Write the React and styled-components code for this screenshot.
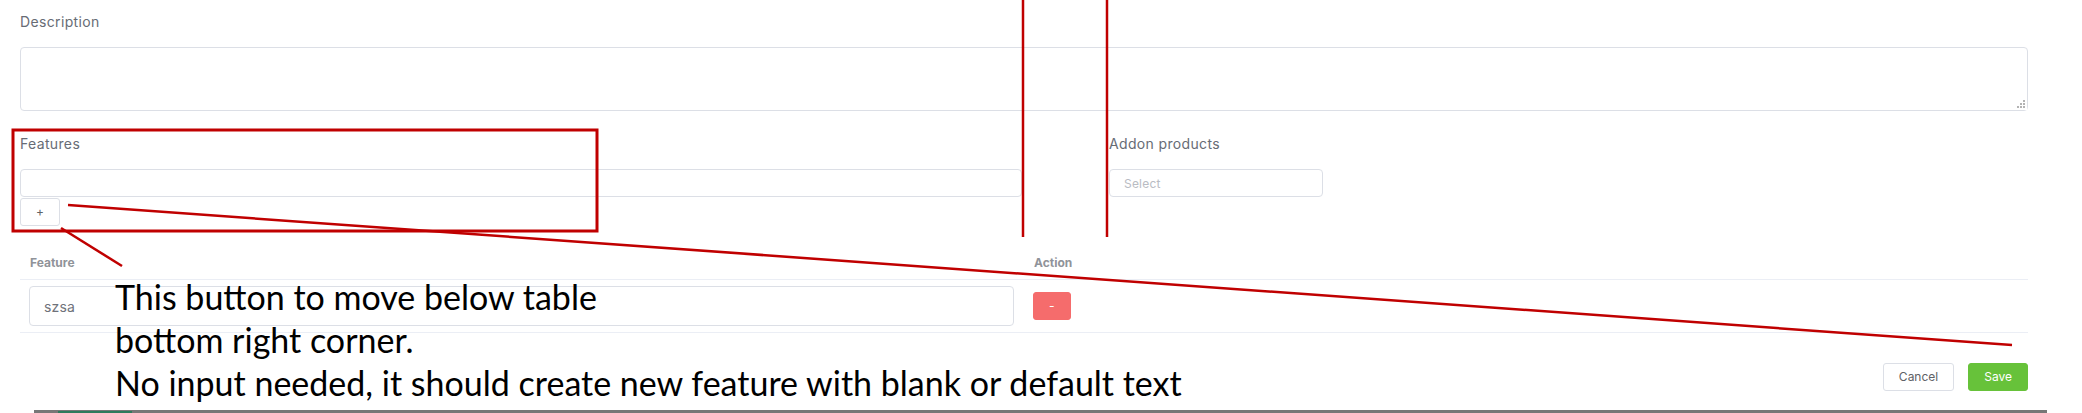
import React from 'react';
import styled, { createGlobalStyle } from 'styled-components';

const GlobalStyle = createGlobalStyle`
  html, body {
    margin: 0;
    padding: 0;
    background: #fff;
  }
  body {
    font-family: Inter, "Open Sans", "Liberation Sans", sans-serif;
    color: #606266;
  }
`;

const Page = styled.div`
  position: relative;
  width: 2082px;
  height: 413px;
  overflow: hidden;
  background: #fff;
`;

const Form = styled.div`
  width: 2008px;
  padding: 9px 0 0 20px;
`;

const Label = styled.div`
  height: 26px;
  line-height: 26px;
  margin-bottom: 12px;
  font-size: 14px;
  letter-spacing: 0.35px;
  color: #676c75;
`;

const TextArea = styled.textarea`
  display: block;
  box-sizing: border-box;
  width: 100%;
  height: 64px;
  padding: 5px 15px;
  border: 1px solid #dcdfe6;
  border-radius: 4px;
  resize: vertical;
  font-family: inherit;
  font-size: 14px;
  color: #606266;
  outline: none;

  &::-webkit-resizer {
    background:
      linear-gradient(#b3b3b3, #b3b3b3) right 2px bottom 2px / 2px 2px no-repeat,
      linear-gradient(#b3b3b3, #b3b3b3) right 5px bottom 2px / 2px 2px no-repeat,
      linear-gradient(#b3b3b3, #b3b3b3) right 8px bottom 2px / 2px 2px no-repeat,
      linear-gradient(#b3b3b3, #b3b3b3) right 2px bottom 5px / 2px 2px no-repeat,
      linear-gradient(#b3b3b3, #b3b3b3) right 5px bottom 5px / 2px 2px no-repeat,
      linear-gradient(#b3b3b3, #b3b3b3) right 2px bottom 8px / 2px 2px no-repeat,
      #fff;
  }
`;

const FieldRow = styled.div`
  display: flex;
  gap: 87px;
  margin-top: 20px;
`;

const Column = styled.div`
  display: flex;
  flex-direction: column;
  align-items: flex-start;
  width: ${(p) => p.$width}px;
`;

const Input = styled.input`
  box-sizing: border-box;
  width: ${(p) => (p.$width ? `${p.$width}px` : '100%')};
  height: ${(p) => (p.$tall ? 40 : 28)}px;
  padding: 0 14px;
  border: 1px solid #dcdfe6;
  border-radius: 4px;
  font-family: inherit;
  font-size: ${(p) => (p.$tall ? 14 : 12)}px;
  letter-spacing: 0.2px;
  color: #6f727a;
  background: #fff;
  outline: none;
  &::placeholder {
    color: #b9bcc3;
  }
`;

const Button = styled.button`
  box-sizing: border-box;
  height: 28px;
  min-width: ${(p) => p.$min || 0}px;
  padding: 0 15px;
  margin-top: ${(p) => p.$top || 0}px;
  border: 1px solid ${(p) => (p.$variant === 'success' ? '#67c23a' : p.$variant === 'danger' ? '#f56c6c' : '#dcdfe6')};
  border-radius: 3px;
  background: ${(p) => (p.$variant === 'success' ? '#67c23a' : p.$variant === 'danger' ? '#f56c6c' : '#fff')};
  color: ${(p) => (p.$variant ? '#fff' : '#606266')};
  font-family: inherit;
  font-size: 12px;
  line-height: 1;
  cursor: pointer;
`;

const Table = styled.div`
  margin-top: 13px;
  font-size: 14px;
`;

const TableRow = styled.div`
  display: grid;
  grid-template-columns: 1004px 1fr;
  align-items: center;
  border-bottom: 1px solid #ebeef5;
`;

const HeadCell = styled.div`
  padding: 12px 10px 5px;
  line-height: 23px;
  font-size: 12px;
  font-weight: 700;
  color: #909399;
`;

const Cell = styled.div`
  padding: 6px 10px 6px 9px;
  display: flex;
  align-items: center;
`;

const Footer = styled.div`
  display: flex;
  justify-content: flex-end;
  gap: 14px;
  margin-top: 30px;
`;

const BottomStrip = styled.div`
  display: flex;
  box-sizing: border-box;
  margin: 19px 0 0 34px;
  width: 2013px;
  height: 3px;
  padding: 1px 0 0 24px;
  background: #777;
`;

const StripTab = styled.div`
  width: 74px;
  height: 2px;
  background: #2e7a5c;
`;

const Overlay = styled.svg`
  position: absolute;
  left: 0;
  top: 0;
  pointer-events: none;
`;

const Note = styled.div`
  position: absolute;
  left: 115px;
  top: 275px;
  font-family: Lato, "Open Sans", sans-serif;
  font-size: 34px;
  line-height: 43px;
  color: #000;
  white-space: nowrap;
  pointer-events: none;
`;

const RED = '#c00000';

const features = [{ id: 1, text: 'szsa' }];

export default function App() {
  return (
    <Page>
      <GlobalStyle />
      <Form>
        <Label>Description</Label>
        <TextArea />

        <FieldRow>
          <Column $width={1002}>
            <Label>Features</Label>
            <Input />
            <Button $top={1} $min={38}>+</Button>
          </Column>
          <Column $width={214}>
            <Label>Addon products</Label>
            <Input placeholder="Select" readOnly />
          </Column>
        </FieldRow>

        <Table>
          <TableRow>
            <HeadCell>Feature</HeadCell>
            <HeadCell>Action</HeadCell>
          </TableRow>
          {features.map((f) => (
            <TableRow key={f.id}>
              <Cell>
                <Input $tall defaultValue={f.text} />
              </Cell>
              <Cell>
                <Button $variant="danger" $min={37}>-</Button>
              </Cell>
            </TableRow>
          ))}
        </Table>

        <Footer>
          <Button>Cancel</Button>
          <Button $variant="success">Save</Button>
        </Footer>
      </Form>
      <BottomStrip>
        <StripTab />
      </BottomStrip>

      <Overlay width="2082" height="413" viewBox="0 0 2082 413">
        <rect x="13" y="130" width="584" height="101" fill="none" stroke={RED} strokeWidth="3" />
        <line x1="1023" y1="0" x2="1023" y2="237" stroke={RED} strokeWidth="2.5" />
        <line x1="1107" y1="0" x2="1107" y2="237" stroke={RED} strokeWidth="2.5" />
        <line x1="68" y1="205" x2="2012" y2="345" stroke={RED} strokeWidth="2.5" />
        <line x1="61" y1="228" x2="122" y2="266" stroke={RED} strokeWidth="2.5" />
      </Overlay>
      <Note>
        This button to move below table
        <br />
        bottom right corner.
        <br />
        No input needed, it should create new feature with blank or default text
      </Note>
    </Page>
  );
}
